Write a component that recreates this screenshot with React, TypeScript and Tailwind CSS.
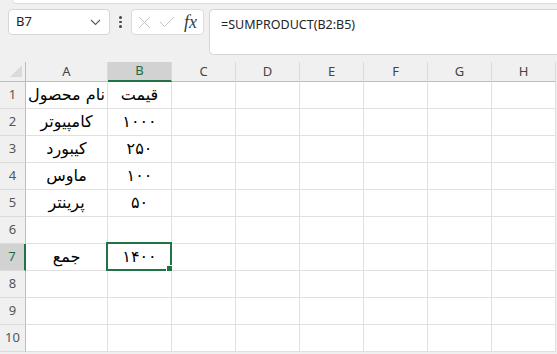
import React from 'react';

const cols = ['A', 'B', 'C', 'D', 'E', 'F', 'G', 'H'];
const colWidths = ['w-[82px]', 'w-[64px]', 'w-[64px]', 'w-[64px]', 'w-[64px]', 'w-[64px]', 'w-[64px]', 'w-[64px]'];

const rows: Array<[string, string]> = [
  ['نام محصول', 'قیمت'],
  ['کامپیوتر', '۱۰۰۰'],
  ['کیبورد', '۲۵۰'],
  ['ماوس', '۱۰۰'],
  ['پرینتر', '۵۰'],
  ['', ''],
  ['جمع', '۱۴۰۰'],
  ['', ''],
  ['', ''],
  ['', ''],
];

const ui = "font-['Noto_Sans','Open_Sans',sans-serif]";
const cellFont = "font-['DejaVu_Sans',sans-serif]";

export default function App() {
  return (
    <div className="w-[557px] h-[354px] overflow-hidden bg-[#f0f0f0] relative">
      {/* ribbon edge */}
      <div className="ml-[12px] h-[4px] bg-white border-b border-l border-[#dcdcdc] rounded-bl-[4px]" />

      {/* formula bar row */}
      <div className="flex items-start h-[58px] pt-[5px] pl-[8px]">
        <div className="w-[102px] h-[26px] bg-white border border-[#d6d6d6] rounded-[4px] flex items-center justify-between pl-[7px] pr-[8px]">
          <span className={`${ui} text-[13px] text-[#242424]`}>B7</span>
          <svg width="11" height="7" viewBox="0 0 11 7" fill="none">
            <path d="M1 1l4.5 4.5L10 1" stroke="#5a5a5a" strokeWidth="1.1" />
          </svg>
        </div>
        <div className="w-[21px] h-[26px] flex flex-col items-center justify-center gap-[2px]">
          <span className="w-[2.5px] h-[2.5px] rounded-full bg-[#444]" />
          <span className="w-[2.5px] h-[2.5px] rounded-full bg-[#444]" />
          <span className="w-[2.5px] h-[2.5px] rounded-full bg-[#444]" />
        </div>
        <div className="w-[73px] h-[26px] bg-white border border-[#dcdcdc] rounded-[4px] flex items-center pl-[6px]">
          <svg width="13" height="13" viewBox="0 0 13 13" fill="none">
            <path d="M1 1l11 11M12 1L1 12" stroke="#c4c4c4" strokeWidth="1" />
          </svg>
          <svg width="16" height="12" viewBox="0 0 16 12" fill="none" className="ml-[8px]">
            <path d="M1 6l4.5 4.5L15 1" stroke="#c4c4c4" strokeWidth="1" />
          </svg>
          <span className="ml-[9px] font-['Liberation_Serif',serif] italic text-[18px] text-[#3a3a3a] leading-none">
            fx
          </span>
        </div>
        <div className="ml-[5px] flex-1 h-[46px] bg-white border border-[#d6d6d6] rounded-l-[5px] border-r-0 pl-[11px] pt-[1px]">
          <span className={`${ui} text-[12.5px] text-[#242424]`}>=SUMPRODUCT(B2:B5)</span>
        </div>
      </div>

      {/* column headers */}
      <div className="flex h-[20px]">
        <div className="w-[26px] border-r border-b border-[#bdbdbd] relative">
          <svg width="12" height="12" viewBox="0 0 12 12" className="absolute left-[10px] top-[3px]">
            <path d="M12 0L12 12L0 12Z" fill="#dadada" />
          </svg>
        </div>
        {cols.map((c, i) => {
          const sel = c === 'B';
          return (
            <div
              key={c}
              className={`${colWidths[i]} flex items-center justify-center border-r border-[#dadada] ${ui} text-[13px] ${
                sel ? 'bg-[#d2d2d2] text-[#1e6b3f] border-b-2 border-b-[#217346]' : 'text-[#444] border-b border-b-[#bdbdbd]'
              }`}
            >
              {c}
            </div>
          );
        })}
      </div>

      {/* rows */}
      {rows.map((r, ri) => {
        const n = ri + 1;
        const selRow = n === 7;
        return (
          <div key={n} className="flex h-[27px]">
            <div
              className={`w-[26px] flex items-center justify-center border-b border-[#dadada] ${ui} text-[13px] ${
                selRow
                  ? 'bg-[#d2d2d2] text-[#1e6b3f] border-r-2 border-r-[#217346]'
                  : 'text-[#555] border-r border-r-[#bdbdbd]'
              }`}
            >
              {n}
            </div>
            {cols.map((c, ci) => {
              const text = ci < 2 ? r[ci] : '';
              const isSel = selRow && c === 'B';
              return (
                <div
                  key={c}
                  className={`${colWidths[ci]} relative bg-white border-r border-b border-[#e0e0e0] flex items-center justify-center ${cellFont} text-[16px] text-black`}
                  dir="rtl"
                >
                  {text}
                  {isSel && (
                    <div className="absolute -left-[2px] -top-[2px] -right-[1px] -bottom-[1px] border-2 border-[#217346]">
                      <div className="absolute -right-[4px] -bottom-[4px] w-[6px] h-[6px] bg-[#217346] border border-white box-content" />
                    </div>
                  )}
                </div>
              );
            })}
          </div>
        );
      })}
    </div>
  );
}
